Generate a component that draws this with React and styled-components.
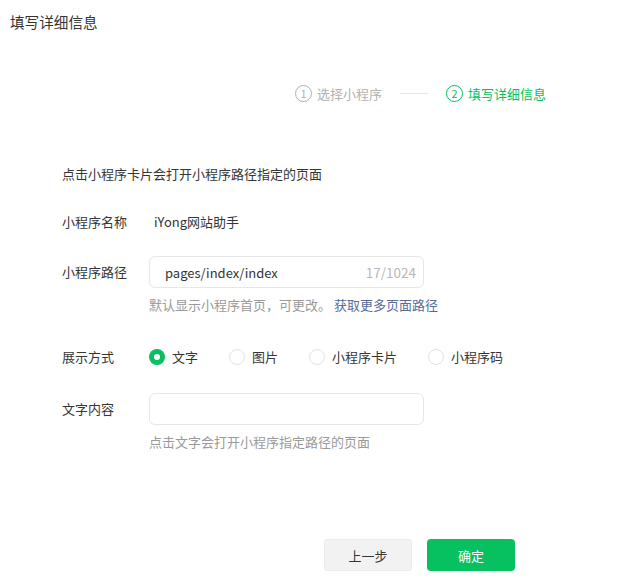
import React, { useState } from 'react';
import styled, { createGlobalStyle } from 'styled-components';

const GlobalStyle = createGlobalStyle`
  body {
    margin: 0;
    background: #fff;
    font-family: "Noto Sans CJK SC", "Noto Sans", sans-serif;
    color: #353535;
  }
`;

const green = '#07c160';

const Page = styled.div`
  width: 640px;
  height: 581px;
  overflow: hidden;
`;

const Title = styled.div`
  padding: 12px 10px 0;
  font-size: 14.6px;
  line-height: 20px;
  color: #353535;
`;

const Steps = styled.div`
  display: flex;
  align-items: center;
  margin-top: 51px;
  padding-left: 295px;
  height: 20px;
`;

const Step = styled.div`
  display: flex;
  align-items: center;
  gap: 5px;
  font-size: 13px;
  color: ${p => (p.$active ? green : '#b2b2b2')};
`;

const StepNum = styled.span`
  display: inline-flex;
  align-items: center;
  justify-content: center;
  width: 15px;
  height: 15px;
  border: 1px solid currentColor;
  border-radius: 50%;
  font-size: 11px;
  line-height: 1;
`;

const StepLine = styled.div`
  width: 28px;
  height: 1px;
  background: #e5e5e5;
  margin: 0 18px;
`;

const Form = styled.div`
  padding-left: 62px;
  font-size: 13px;
`;

const Desc = styled.div`
  margin-top: 61px;
  line-height: 20px;
`;

const Row = styled.div`
  display: flex;
  align-items: center;
  margin-top: ${p => p.$mt}px;
  min-height: 20px;
`;

const Label = styled.div`
  width: 87px;
  flex-shrink: 0;
  line-height: 20px;
`;

const Value = styled.div`
  padding-left: 5px;
  line-height: 20px;
`;

const InputBox = styled.div`
  box-sizing: border-box;
  width: 275px;
  height: 32px;
  border: 1px solid #e7e7e7;
  border-radius: 6px;
  display: flex;
  align-items: center;
  padding: 0 7px 0 15px;
  font-size: 13px;
`;

const InputText = styled.span`
  flex: 1;
  color: #353535;
`;

const Counter = styled.span`
  font-size: 13.5px;
  color: #b8b8b8;
`;

const Help = styled.div`
  margin-top: 8px;
  padding-left: 87px;
  line-height: 18px;
  color: #9a9a9a;
`;

const HelpLink = styled.a`
  color: #576b95;
  text-decoration: none;
  margin-left: 3px;
`;

const Radios = styled.div`
  display: flex;
  align-items: center;
  gap: 31px;
`;

const RadioItem = styled.label`
  display: flex;
  align-items: center;
  gap: 7px;
  cursor: pointer;
  line-height: 20px;
`;

const RadioDot = styled.span`
  box-sizing: border-box;
  width: 16px;
  height: 16px;
  border-radius: 50%;
  background: ${p => (p.$checked ? green : '#fff')};
  border: ${p => (p.$checked ? 'none' : '1px solid #e3e3e3')};
  display: inline-flex;
  align-items: center;
  justify-content: center;

  &::after {
    content: '';
    width: 6px;
    height: 6px;
    border-radius: 50%;
    background: #fff;
    display: ${p => (p.$checked ? 'block' : 'none')};
  }
`;

const Buttons = styled.div`
  display: flex;
  gap: 15px;
  margin-top: 88px;
  padding-left: 324px;
`;

const Button = styled.button`
  width: 88px;
  height: 32px;
  border-radius: 4px;
  border: none;
  font-family: inherit;
  font-size: 13px;
  cursor: pointer;
  background: ${p => (p.$primary ? green : '#f2f2f2')};
  color: ${p => (p.$primary ? '#fff' : '#353535')};
  box-shadow: ${p => (p.$primary ? 'none' : 'inset 0 0 0 1px #ececec')};
`;

const modes = ['文字', '图片', '小程序卡片', '小程序码'];

export default function App() {
  const [mode, setMode] = useState('文字');

  return (
    <Page>
      <GlobalStyle />
      <Title>填写详细信息</Title>

      <Steps>
        <Step>
          <StepNum>1</StepNum>
          选择小程序
        </Step>
        <StepLine />
        <Step $active>
          <StepNum>2</StepNum>
          填写详细信息
        </Step>
      </Steps>

      <Form>
        <Desc>点击小程序卡片会打开小程序路径指定的页面</Desc>

        <Row $mt={28}>
          <Label>小程序名称</Label>
          <Value>iYong网站助手</Value>
        </Row>

        <Row $mt={24}>
          <Label>小程序路径</Label>
          <InputBox>
            <InputText>pages/index/index</InputText>
            <Counter>17/1024</Counter>
          </InputBox>
        </Row>
        <Help>
          默认显示小程序首页，可更改。
          <HelpLink href="#">获取更多页面路径</HelpLink>
        </Help>

        <Row $mt={33}>
          <Label>展示方式</Label>
          <Radios>
            {modes.map(m => (
              <RadioItem key={m} onClick={() => setMode(m)}>
                <RadioDot $checked={mode === m} />
                {m}
              </RadioItem>
            ))}
          </Radios>
        </Row>

        <Row $mt={26}>
          <Label>文字内容</Label>
          <InputBox />
        </Row>
        <Help>点击文字会打开小程序指定路径的页面</Help>
      </Form>

      <Buttons>
        <Button>上一步</Button>
        <Button $primary>确定</Button>
      </Buttons>
    </Page>
  );
}
